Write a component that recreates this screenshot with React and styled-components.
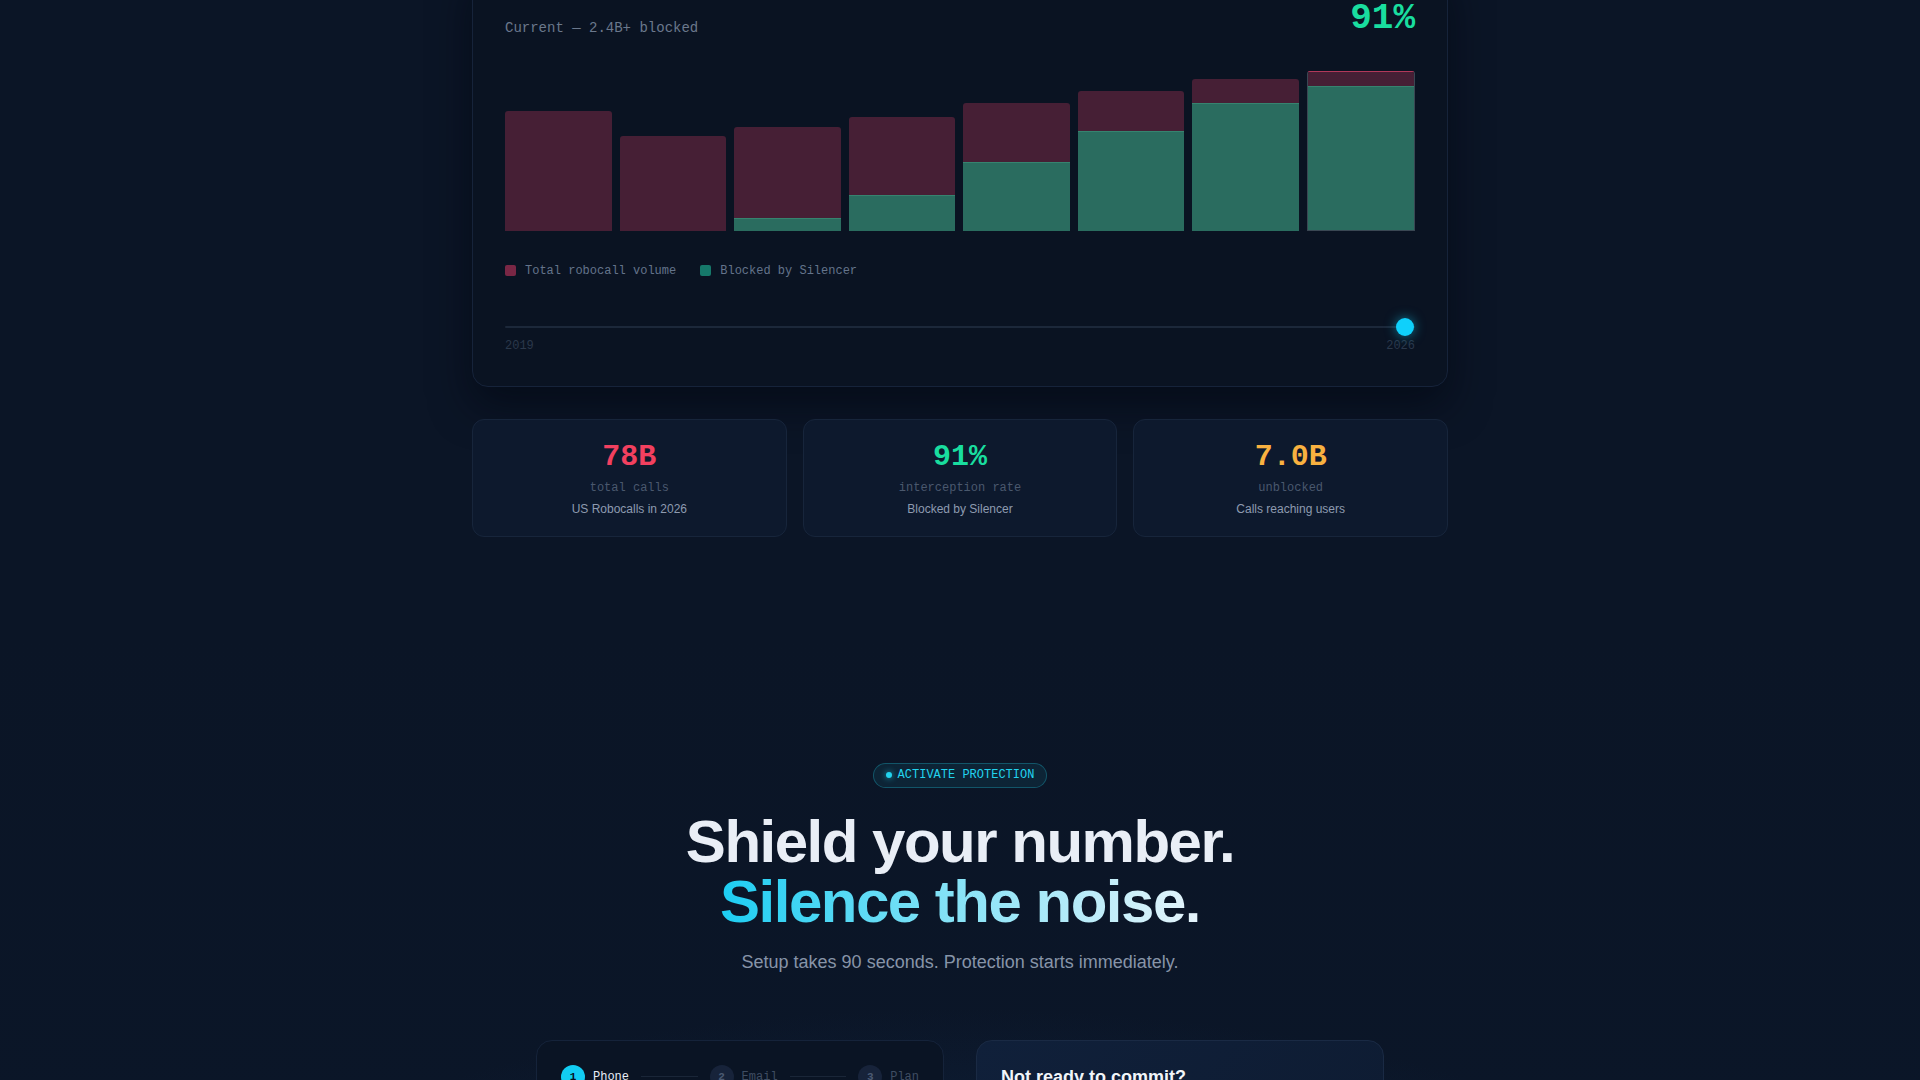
import React from "react";
import styled, { createGlobalStyle } from "styled-components";

const Global = createGlobalStyle`
  html, body { margin: 0; padding: 0; background: #0b1526; overflow: hidden; }
  body { font-family: "Liberation Sans", Arial, sans-serif; color: #e2e8f0; }
  * { box-sizing: border-box; }
`;

const MONO = `"Liberation Mono", "DejaVu Sans Mono", monospace`;

const Page = styled.div`
  width: 100%;
  min-height: 1200px;
  background: #0b1526;
  /* page is scrolled: the top of the chart card lies above the viewport */
  margin-top: -34px;
`;

const TopSection = styled.section`
  display: flex;
  flex-direction: column;
  align-items: center;
  padding-bottom: 96px;
`;

const Container = styled.div`
  width: 976px;
`;

const ChartCard = styled.div`
  background: #0a1322;
  border: 1px solid #16233a;
  border-radius: 16px;
  padding: 32px;
  box-shadow: 0 18px 40px rgba(2, 6, 14, 0.55);
`;

const Header = styled.div`
  display: flex;
  justify-content: space-between;
  align-items: flex-end;
`;

const Subtitle = styled.div`
  font-family: ${MONO};
  font-size: 14px;
  line-height: 21px;
  color: #6b788c;
`;

const BigRate = styled.div`
  font-family: ${MONO};
  font-size: 36px;
  line-height: 1.1;
  font-weight: 700;
  color: #19dd9f;
`;

const Bars = styled.div`
  margin-top: 32px;
  height: 160px;
  display: flex;
  align-items: flex-end;
  gap: 8px;
`;

const Bar = styled.div`
  flex: 1;
  display: flex;
  flex-direction: column;
  border-radius: 3px 3px 0 0;
  overflow: hidden;
  border: ${(p) => (p.$active ? "1px solid rgba(150, 170, 175, 0.35)" : "none")};
  border-top-color: ${(p) => (p.$active ? "rgba(235, 70, 110, 0.75)" : "transparent")};
`;

const Unblocked = styled.div`
  flex: 1;
  background: #461f35;
`;

const Blocked = styled.div`
  background: #2a6c5f;
  box-shadow: inset 0 1px 0 rgba(90, 200, 160, 0.25);
`;

const Legend = styled.div`
  margin-top: 31px;
  display: flex;
  gap: 24px;
`;

const LegendItem = styled.div`
  display: flex;
  align-items: center;
  gap: 9px;
  font-family: ${MONO};
  font-size: 12px;
  line-height: 18px;
  color: #64748b;
`;

const Swatch = styled.span`
  width: 11px;
  height: 11px;
  border-radius: 2px;
  background: ${(p) => p.$color};
`;

const Slider = styled.div`
  position: relative;
  margin-top: 38px;
  height: 18px;
  display: flex;
  align-items: center;
`;

const Track = styled.div`
  flex: 1;
  height: 2px;
  border-radius: 1px;
  background: #1c283a;
`;

const Thumb = styled.div`
  position: absolute;
  right: 1px;
  top: 0;
  width: 18px;
  height: 18px;
  border-radius: 50%;
  background: #0fd0fb;
  box-shadow: 0 0 12px rgba(20, 210, 250, 0.55);
`;

const Ticks = styled.div`
  margin-top: 2px;
  display: flex;
  justify-content: space-between;
  font-family: ${MONO};
  font-size: 12px;
  line-height: 16px;
  color: #2b384b;
`;

const Stats = styled.div`
  margin-top: 32px;
  display: grid;
  grid-template-columns: repeat(3, 1fr);
  gap: 16px;
`;

const StatCard = styled.div`
  background: #0d192d;
  border: 1px solid #17253b;
  border-radius: 12px;
  padding: 19px 16px 18px;
  display: flex;
  flex-direction: column;
  align-items: center;
`;

const StatValue = styled.div`
  font-family: ${MONO};
  font-size: 30px;
  line-height: 36px;
  font-weight: 700;
  color: ${(p) => p.$color};
`;

const StatLabel = styled.div`
  margin-top: 5px;
  font-family: ${MONO};
  font-size: 12px;
  line-height: 16px;
  color: #4a586d;
`;

const StatDesc = styled.div`
  margin-top: 4px;
  font-size: 12px;
  line-height: 18px;
  color: #8e9bb0;
`;

const CtaSection = styled.section`
  padding-top: 130px;
  padding-bottom: 80px;
  display: flex;
  flex-direction: column;
  align-items: center;
  background:
    radial-gradient(ellipse 55% 45% at 50% 78%, rgba(22, 52, 92, 0.42), rgba(11, 21, 38, 0) 70%),
    linear-gradient(180deg, #0b1526 0%, #0b1628 60%, #0c1a2e 100%);
`;

const Pill = styled.div`
  display: inline-flex;
  align-items: center;
  gap: 6px;
  padding: 4px 12px;
  border-radius: 999px;
  border: 1px solid rgba(34, 211, 238, 0.28);
  background: rgba(34, 211, 238, 0.08);
  font-family: ${MONO};
  font-size: 12px;
  line-height: 15px;
  color: #22d3ee;
`;

const Dot = styled.span`
  width: 6px;
  height: 6px;
  border-radius: 50%;
  background: #22d3ee;
  box-shadow: 0 0 6px rgba(34, 211, 238, 0.8);
`;

const Headline = styled.h2`
  margin: 24px 0 0;
  font-size: 60px;
  line-height: 60px;
  font-weight: 700;
  letter-spacing: -0.025em;
  text-align: center;
  color: #e9eef6;
`;

const Gradient = styled.span`
  background: linear-gradient(90deg, #1ccdf2 0%, #7fe1f6 45%, #e6f4fb 100%);
  -webkit-background-clip: text;
  background-clip: text;
  color: transparent;
`;

const Lead = styled.p`
  margin: 16px 0 0;
  font-size: 18px;
  line-height: 28px;
  color: #8794a8;
  text-align: center;
`;

const Panels = styled.div`
  margin-top: 64px;
  width: 848px;
  display: grid;
  grid-template-columns: 1fr 1fr;
  gap: 32px;
`;

const FormCard = styled.div`
  background: #0a1424;
  border: 1px solid #15233a;
  border-radius: 16px;
  padding: 24px;
  min-height: 320px;
`;

const Steps = styled.div`
  display: flex;
  align-items: center;
`;

const Step = styled.div`
  display: flex;
  align-items: center;
  gap: 8px;
  font-family: ${MONO};
  font-size: 12px;
  line-height: 16px;
  color: ${(p) => (p.$active ? "#e8eef6" : "#3f4d62")};
`;

const StepNum = styled.span`
  width: 24px;
  height: 24px;
  border-radius: 50%;
  display: flex;
  align-items: center;
  justify-content: center;
  font-family: ${MONO};
  font-size: 11px;
  font-weight: 700;
  background: ${(p) => (p.$active ? "#12cdf3" : "#17233a")};
  color: ${(p) => (p.$active ? "#06121f" : "#4b5a72")};
`;

const Connector = styled.div`
  flex: 1;
  height: 1px;
  margin: 0 12px;
  background: #1a2638;
`;

const AltCard = styled.div`
  background: linear-gradient(135deg, #10203a 0%, #0d1a2f 100%);
  border: 1px solid #1a2a44;
  border-radius: 16px;
  padding: 24px;
  min-height: 320px;
`;

const AltTitle = styled.h3`
  margin: 0;
  font-size: 18px;
  line-height: 1.4;
  font-weight: 700;
  color: #f1f5f9;
`;

const DATA = [
  { year: 2019, volume: 58.5, rate: 0 },
  { year: 2020, volume: 45.9, rate: 0 },
  { year: 2021, volume: 50.3, rate: 0.12 },
  { year: 2022, volume: 55.6, rate: 0.31 },
  { year: 2023, volume: 62, rate: 0.54 },
  { year: 2024, volume: 68.3, rate: 0.71 },
  { year: 2025, volume: 74.1, rate: 0.84 },
  { year: 2026, volume: 78, rate: 0.91 },
];
const MAX = 78;

const STATS = [
  { value: "78B", color: "#f2405f", label: "total calls", desc: "US Robocalls in 2026" },
  { value: "91%", color: "#19dd9f", label: "interception rate", desc: "Blocked by Silencer" },
  { value: "7.0B", color: "#f8b140", label: "unblocked", desc: "Calls reaching users" },
];

export default function App() {
  return (
    <>
      <Global />
      <Page>
        <TopSection>
          <Container>
            <ChartCard>
              <Header>
                <Subtitle>Current — 2.4B+ blocked</Subtitle>
                <BigRate>91%</BigRate>
              </Header>
              <Bars>
                {DATA.map((d, i) => (
                  <Bar
                    key={d.year}
                    $active={i === DATA.length - 1}
                    style={{ height: `${(d.volume / MAX) * 160}px` }}
                  >
                    <Unblocked />
                    {d.rate > 0 && <Blocked style={{ height: `${d.rate * 100}%` }} />}
                  </Bar>
                ))}
              </Bars>
              <Legend>
                <LegendItem>
                  <Swatch $color="#7a2745" />
                  Total robocall volume
                </LegendItem>
                <LegendItem>
                  <Swatch $color="#16786a" />
                  Blocked by Silencer
                </LegendItem>
              </Legend>
              <Slider>
                <Track />
                <Thumb />
              </Slider>
              <Ticks>
                <span>2019</span>
                <span>2026</span>
              </Ticks>
            </ChartCard>
            <Stats>
              {STATS.map((s) => (
                <StatCard key={s.label}>
                  <StatValue $color={s.color}>{s.value}</StatValue>
                  <StatLabel>{s.label}</StatLabel>
                  <StatDesc>{s.desc}</StatDesc>
                </StatCard>
              ))}
            </Stats>
          </Container>
        </TopSection>
        <CtaSection>
          <Pill>
            <Dot />
            ACTIVATE PROTECTION
          </Pill>
          <Headline>
            Shield your number.
            <br />
            <Gradient>Silence the noise.</Gradient>
          </Headline>
          <Lead>Setup takes 90 seconds. Protection starts immediately.</Lead>
          <Panels>
            <FormCard>
              <Steps>
                <Step $active>
                  <StepNum $active>1</StepNum>
                  Phone
                </Step>
                <Connector />
                <Step>
                  <StepNum>2</StepNum>
                  Email
                </Step>
                <Connector />
                <Step>
                  <StepNum>3</StepNum>
                  Plan
                </Step>
              </Steps>
            </FormCard>
            <AltCard>
              <AltTitle>Not ready to commit?</AltTitle>
            </AltCard>
          </Panels>
        </CtaSection>
      </Page>
    </>
  );
}
